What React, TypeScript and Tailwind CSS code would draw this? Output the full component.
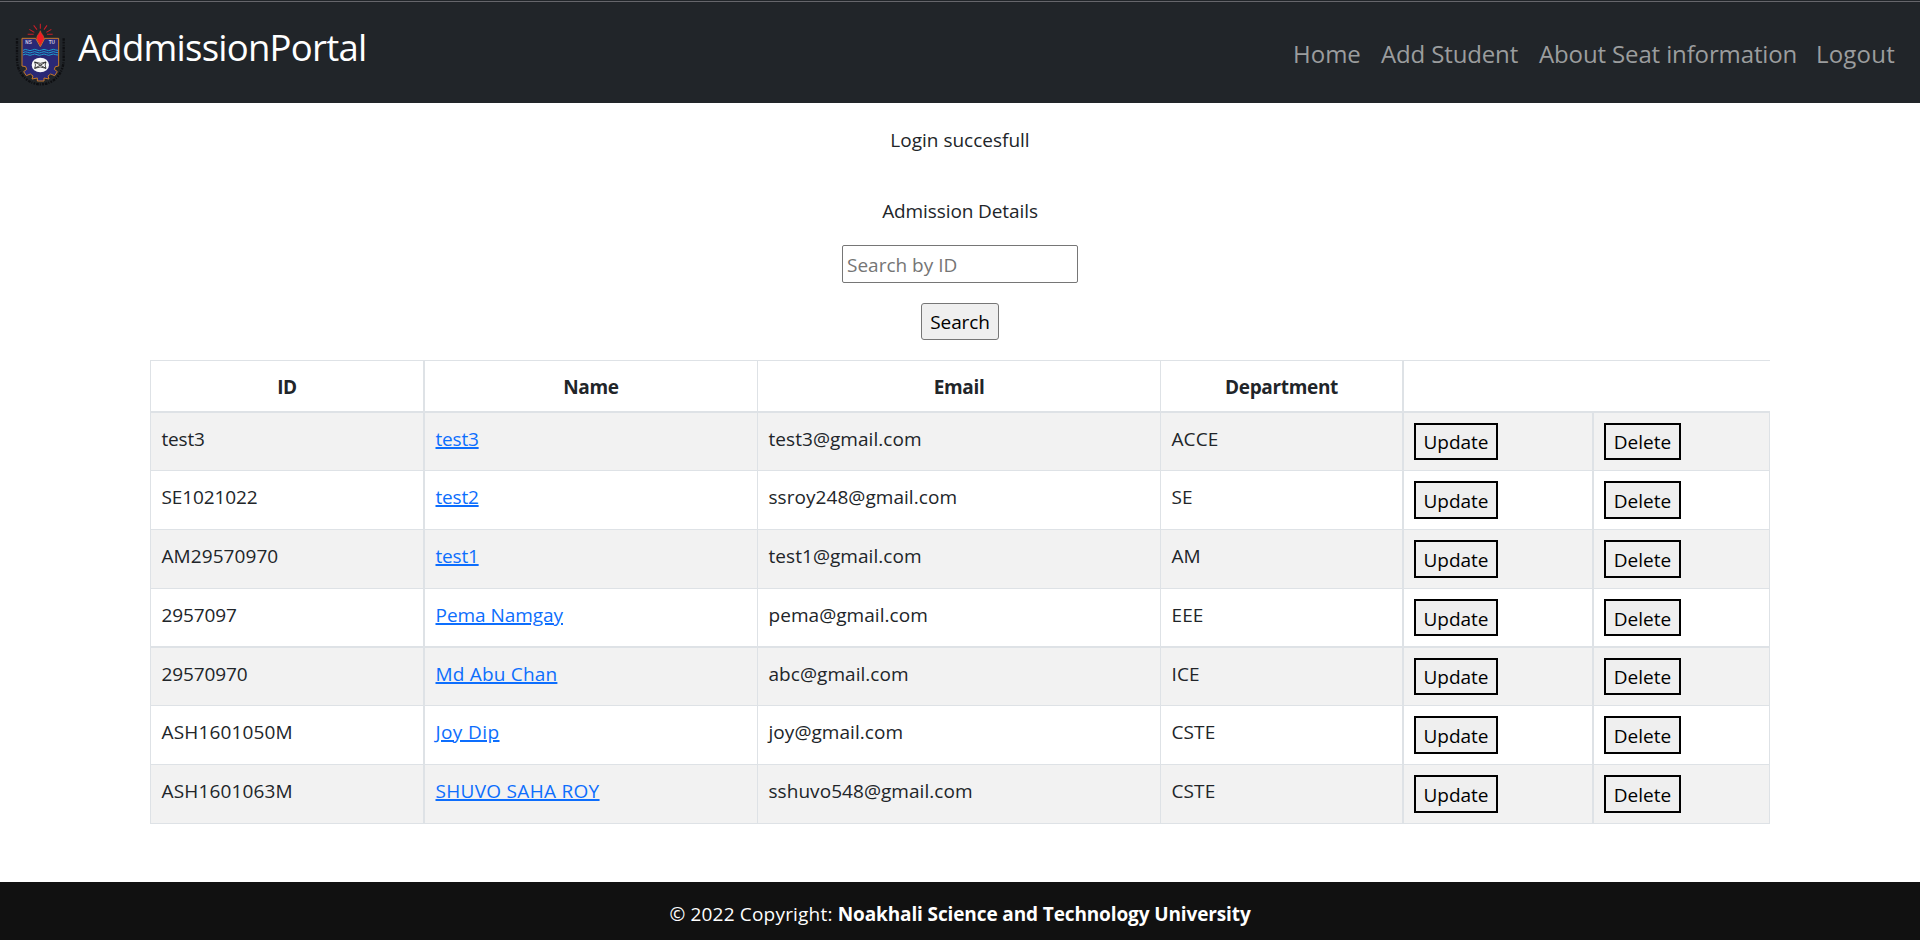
type Row = {
  id: string;
  name: string;
  email: string;
  dept: string;
  height: string;
  button: string;
  idTrack: string;
  nameTrack: string;
};

const rows: Row[] = [
  { id: 'test3', name: 'test3', email: 'test3@gmail.com', dept: 'ACCE', height: 'h-[58px] border-b', button: 'h-[37px] pt-px', idTrack: 'tracking-[-0.2px]', nameTrack: 'tracking-[-0.2px]' },
  { id: 'SE1021022', name: 'test2', email: 'ssroy248@gmail.com', dept: 'SE', height: 'h-[59px] border-b', button: 'h-[38px] pt-px', idTrack: 'tracking-[-0.1px]', nameTrack: 'tracking-[-0.2px]' },
  { id: 'AM29570970', name: 'test1', email: 'test1@gmail.com', dept: 'AM', height: 'h-[59px] border-b', button: 'h-[38px] pt-px', idTrack: 'tracking-[0.08px]', nameTrack: 'tracking-[-0.2px]' },
  { id: '2957097', name: 'Pema Namgay', email: 'pema@gmail.com', dept: 'EEE', height: 'h-[59px] border-b-2', button: 'h-[37px] pt-[3px]', idTrack: 'tracking-[-0.1px]', nameTrack: 'tracking-[-0.05px]' },
  { id: '29570970', name: 'Md Abu Chan', email: 'abc@gmail.com', dept: 'ICE', height: 'h-[58px] border-b', button: 'h-[37px] pt-px', idTrack: 'tracking-[-0.1px]', nameTrack: 'tracking-[0.2px]' },
  { id: 'ASH1601050M', name: 'Joy Dip', email: 'joy@gmail.com', dept: 'CSTE', height: 'h-[59px] border-b', button: 'h-[38px] pt-px', idTrack: 'tracking-[0.16px]', nameTrack: 'tracking-[0.4px]' },
  { id: 'ASH1601063M', name: 'SHUVO SAHA ROY', email: 'sshuvo548@gmail.com', dept: 'CSTE', height: 'h-[59px] border-b', button: 'h-[38px] pt-px', idTrack: 'tracking-[0.16px]', nameTrack: 'tracking-[0.3px]' },
];

function Crest() {
  return (
    <svg className="mt-[23px] ml-[15px] h-16 w-[50px] shrink-0" viewBox="45 69 150 192" fill="none">
      <path d="M51 115V180Q52 215 78 237Q98 253 121 253Q146 253 166 237Q190 214 191 180V115" stroke="#0e0f12" strokeWidth="7" strokeDasharray="5 3 8 3 3 4" />
      <path d="M83 103H101M88 88L103 97M101 76L111 89M121 71V86M141 76L132 89M154 88L139 97M158 103H141" stroke="#c81e27" strokeWidth="3.2" />
      <path
        d="M66 115H107L121 140L134 115H176V198L166 200L163 208L172 215L164 227L152 222L144 228L147 237L132 234V243H112V234L96 237L99 228L91 222L79 227L71 215L80 208L77 200L66 198Z"
        fill="#2a2875"
        stroke="#c77a2b"
        strokeWidth="3"
        strokeLinejoin="round"
      />
      <path d="M121 92C123 101 131 105 132 114C131 123 126 126 121 138C117 126 111 123 110 114C111 105 118 101 121 92Z" fill="#f01c24" stroke="#c96a2a" strokeWidth="1.5" />
      <path
        d="M69 151Q76 146 83 150T97 150T111 150T125 150T139 150T153 150T167 150L174 151M69 158Q76 153 83 157T97 157T111 157T125 157T139 157T153 157T167 157L174 158M69 165Q76 160 83 164T97 164T111 164T125 164T139 164T153 164T167 164L174 165"
        stroke="#1e9fd0"
        strokeWidth="3"
      />
      <ellipse cx="121" cy="195" rx="26" ry="22" fill="#f7f7f7" />
      <path d="M104 186Q121 194 138 186Q133 195 138 205Q121 197 104 205Q109 195 104 186ZM104 186L138 205M138 186L104 205" stroke="#1c1c1c" strokeWidth="2.4" />
      <text x="76" y="132" fontSize="14" fontWeight="700" fontFamily="Liberation Sans, sans-serif" fill="#c9c9e2">NS</text>
      <text x="146" y="132" fontSize="14" fontWeight="700" fontFamily="Liberation Sans, sans-serif" fill="#c9c9e2">TU</text>
    </svg>
  );
}

function ActionButton({ label, size }: { label: string; size: string }) {
  return (
    <button className={`flex items-center justify-center border-2 border-black bg-[#efefef] leading-[30px] text-black ${size}`}>
      {label}
    </button>
  );
}

const grid = 'grid grid-cols-[274px_333px_403px_243px_190px_176px]';
const cell = 'border-[#dee2e6] pr-[10px] pl-[10.5px] pt-[11px] leading-[30px]';
const head = 'border-[#dee2e6] pt-[11px] text-center leading-[30px] font-bold tracking-[-0.33px]';

export default function App() {
  return (
    <div className="flex h-[940px] w-[1920px] flex-col overflow-hidden bg-white font-['Open_Sans',sans-serif] text-[19px] text-[#212529]">
      <header className="flex h-[103px] shrink-0 flex-col bg-[#212529]">
        <div className="h-px shrink-0" />
        <div className="h-px shrink-0 bg-[#66666b]" />
        <div className="-mt-0.5 flex items-start">
          <Crest />
          <h1 className="mt-[19px] ml-[13px] text-[36.5px] leading-[56px] tracking-[-0.75px] text-white">AddmissionPortal</h1>
          <nav className="mt-[35px] ml-auto flex pr-6 text-[24px] leading-[38px] whitespace-nowrap text-[#9b9d9e]">
            <a className="w-[88px]">Home</a>
            <a className="w-[158px] tracking-[-0.14px]">Add Student</a>
            <a className="w-[277px] tracking-[-0.13px]">About Seat information</a>
            <a className="w-20 tracking-[0.2px]">Logout</a>
          </nav>
        </div>
      </header>

      <main className="flex flex-1 flex-col items-center">
        <p className="mt-[22px] leading-[30px]">Login succesfull</p>
        <p className="mt-[41px] leading-[30px] tracking-[-0.1px]">Admission Details</p>
        <input
          className="mt-[19px] h-[38px] w-[236px] rounded-[2px] border border-[#767676] bg-white px-1 pt-px leading-[30px] outline-none placeholder:text-[#757575]"
          placeholder="Search by ID"
        />
        <button className="mt-5 flex h-[37px] w-[78px] items-center justify-center rounded-[3px] border border-[#767676] bg-[#efefef] pt-px leading-[30px] tracking-[-0.14px] text-black">
          Search
        </button>

        <section className="mt-5 w-[1620px] border-l border-[#dee2e6]">
          <div className={`${grid} h-[53px] border-t border-b-2 border-[#dee2e6]`}>
            <div className={`${head} border-r-2`}>ID</div>
            <div className={`${head} border-r`}>Name</div>
            <div className={`${head} border-r`}>Email</div>
            <div className={`${head} border-r-2`}>Department</div>
          </div>
          {rows.map((r, i) => (
            <div key={r.id} className={`${grid} border-[#dee2e6] ${r.height} ${i % 2 === 0 ? 'bg-[#f2f2f2]' : 'bg-white'}`}>
              <div className={`${cell} border-r-2 ${r.idTrack}`}>{r.id}</div>
              <div className={`${cell} border-r`}>
                <a className={`text-[#0d6efd] underline decoration-2 underline-offset-1 ${r.nameTrack}`}>{r.name}</a>
              </div>
              <div className={`${cell} border-r tracking-[0.05px]`}>{r.email}</div>
              <div className={`${cell} border-r-2 tracking-[0.1px]`}>{r.dept}</div>
              <div className="border-r-2 border-[#dee2e6] px-[10px] pt-[10px]">
                <ActionButton label="Update" size={`w-[84px] ${r.button}`} />
              </div>
              <div className="border-r border-[#dee2e6] px-[10px] pt-[10px]">
                <ActionButton label="Delete" size={`w-[77px] ${r.button}`} />
              </div>
            </div>
          ))}
        </section>
      </main>

      <footer className="flex h-[58px] shrink-0 items-start justify-center bg-[#111111] pt-[17px] leading-[30px] whitespace-pre text-white">
        <span className="tracking-[0.19px]">© 2022 Copyright: </span>
        <span className="font-bold tracking-[-0.12px]">Noakhali Science and Technology University</span>
      </footer>
    </div>
  );
}
